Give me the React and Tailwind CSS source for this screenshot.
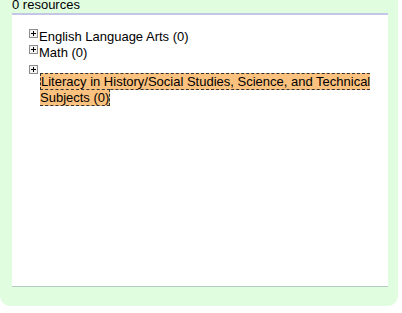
import React from 'react';

const PlusBox = ({ className = '' }) => (
  <svg width="9" height="9" viewBox="0 0 9 9" className={className}>
    <rect x="0.5" y="0.5" width="8" height="8" fill="#f4f4f4" stroke="#8c8c8c" />
    <path d="M2 4.5h5M4.5 2v5" stroke="#000" strokeWidth="1" />
  </svg>
);

const nodes = [
  { label: 'English Language Arts (0)' },
  { label: 'Math (0)' },
];

const App = () => {
  return (
    <div className="w-[398px] h-[306px] bg-[#e1fde0] rounded-b-[10px] pl-[12px] pr-[10px] text-[13px] leading-[16px] text-black font-['Liberation_Sans',Arial,sans-serif]">
      {/* header, top of the line is cut off by the window */}
      <div className="h-[13px] flex flex-col justify-end">
        <div className="whitespace-nowrap">0 resources</div>
      </div>

      {/* panel */}
      <div className="h-[274px] bg-white border-t-2 border-[#c3c6e4] border-b border-b-[#b4c8c4] pt-[14px] pl-[17px] pr-[6px]">
        {nodes.map((n) => (
          <div key={n.label} className="whitespace-nowrap">
            <PlusBox className="inline-block align-text-top" />
            <span className="ml-[1px]">{n.label}</span>
          </div>
        ))}
        <div className="h-[13px] pt-[4px]">
          <PlusBox className="block" />
        </div>
        <div className="pl-[11px]">
          <span className="bg-[#fbc17e] border border-dashed border-[#333]">
            Literacy in History/Social Studies, Science, and Technical Subjects (0)
          </span>
        </div>
      </div>
    </div>
  );
};

export default App;
